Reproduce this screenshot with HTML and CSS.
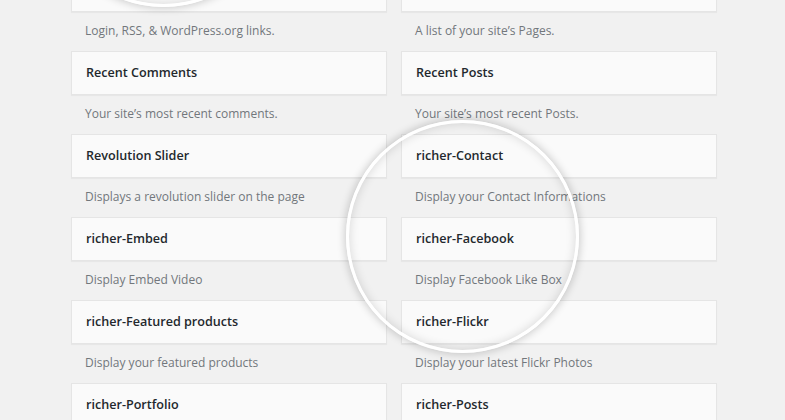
FILE: index.html
```html
<!DOCTYPE html>
<html lang="en">
<head>
<meta charset="utf-8">
<title>Widgets</title>
<link rel="stylesheet" href="styles.css">
</head>
<body>
<div class="page">
  <div class="widgets">
    <div class="widget">
      <div class="widget-top"><h3>Meta</h3></div>
      <p class="desc">Login, RSS, &amp; WordPress.org links.</p>
    </div>
    <div class="widget">
      <div class="widget-top"><h3>Pages</h3></div>
      <p class="desc">A list of your site’s Pages.</p>
    </div>
    <div class="widget">
      <div class="widget-top"><h3>Recent Comments</h3></div>
      <p class="desc">Your site’s most recent comments.</p>
    </div>
    <div class="widget">
      <div class="widget-top"><h3>Recent Posts</h3></div>
      <p class="desc">Your site’s most recent Posts.</p>
    </div>
    <div class="widget">
      <div class="widget-top"><h3>Revolution Slider</h3></div>
      <p class="desc">Displays a revolution slider on the page</p>
    </div>
    <div class="widget">
      <div class="widget-top"><h3>richer-Contact</h3></div>
      <p class="desc">Display your Contact Informations</p>
    </div>
    <div class="widget">
      <div class="widget-top"><h3>richer-Embed</h3></div>
      <p class="desc">Display Embed Video</p>
    </div>
    <div class="widget">
      <div class="widget-top"><h3>richer-Facebook</h3></div>
      <p class="desc">Display Facebook Like Box</p>
    </div>
    <div class="widget">
      <div class="widget-top"><h3>richer-Featured products</h3></div>
      <p class="desc">Display your featured products</p>
    </div>
    <div class="widget">
      <div class="widget-top"><h3>richer-Flickr</h3></div>
      <p class="desc">Display your latest Flickr Photos</p>
    </div>
    <div class="widget">
      <div class="widget-top"><h3>richer-Portfolio</h3></div>
      <p class="desc">Display your portfolio items</p>
    </div>
    <div class="widget">
      <div class="widget-top"><h3>richer-Posts</h3></div>
      <p class="desc">Display your latest posts</p>
    </div>
  </div>
  <div class="lens lens-top"></div>
  <div class="lens lens-main"></div>
</div>
</body>
</html>
```

FILE: styles.css
```css
html, body {
  margin: 0;
  padding: 0;
  background: #f1f1f1;
  overflow: hidden;
}
body {
  width: 785px;
  height: 420px;
  font-family: "Open Sans", "Liberation Sans", sans-serif;
  font-size: 13px;
}
.page {
  position: relative;
  width: 785px;
  height: 420px;
  overflow: hidden;
}
.widgets {
  display: grid;
  grid-template-columns: 316px 316px;
  column-gap: 14px;
  margin: -32px 0 0 71px;
}
.widget-top {
  box-sizing: border-box;
  height: 44px;
  background: #fafafa;
  border: 1px solid #e5e5e5;
  box-shadow: 0 1px 1px rgba(0, 0, 0, 0.04);
  display: flex;
  align-items: center;
  padding: 0 14px;
}
.widget-top h3 {
  margin: 0;
  font-size: 12.6px;
  font-weight: 600;
  color: #23282d;
  line-height: 1.2;
}
.desc {
  margin: 0;
  height: 39px;
  box-sizing: border-box;
  padding: 9px 14px 0;
  line-height: 19px;
  color: #72777c;
  font-size: 12px;
  white-space: nowrap;
}
.lens {
  position: absolute;
  width: 227px;
  height: 227px;
  border-radius: 50%;
  border: 3px solid #fff;
  box-shadow: 0 0 8px 1px rgba(0, 0, 0, 0.2), inset 0 0 10px 1px rgba(0, 0, 0, 0.12);
}
.lens-main {
  left: 346px;
  top: 120px;
}
.lens-top {
  left: 47px;
  top: -226px;
}
```
